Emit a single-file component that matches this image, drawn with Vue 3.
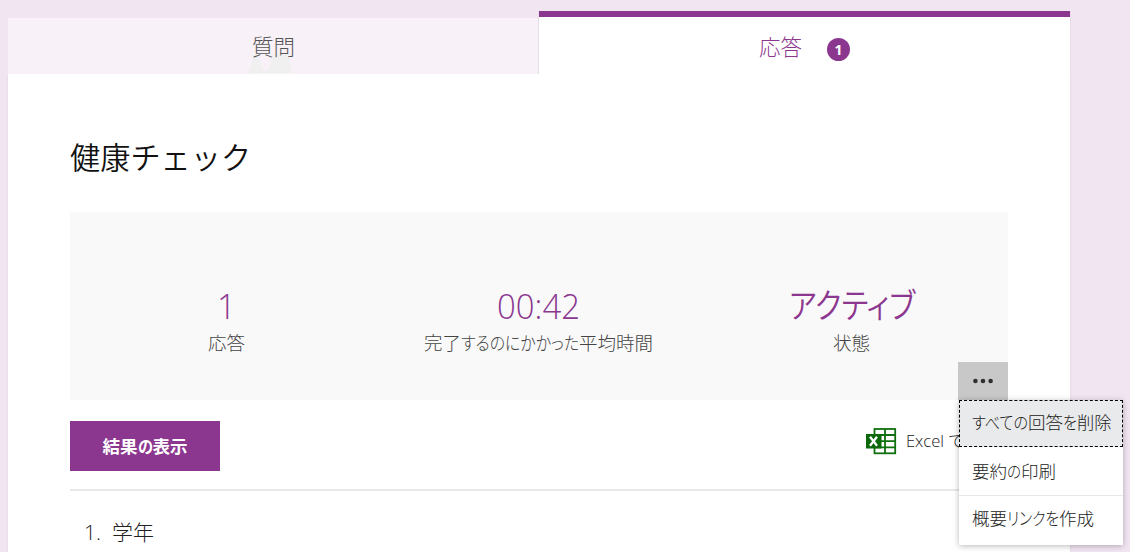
<script setup>
const stats = [
  { value: [['1', 19]], label: [['応答', 37]] },
  { value: [['00:42', 83]], label: [['完了', 37], ['するのにかかった', 118], ['平均時間', 74]] },
  { value: [['アクティブ', 126]], label: [['状態', 37]], kana: true },
]
const menu = [
  [['すべての', 56], ['回答', 35], ['を', 14], ['削除', 34.5]],
  [['要約', 35], ['の', 14], ['印刷', 35]],
  [['概要', 35], ['リンクを', 52], ['作成', 35]],
]
const button = [['結果', 35], ['の', 15], ['表示', 35]]

// Condenses a run of glyphs to a given advance width.
const vFit = {
  mounted(el, { value }) {
    const inner = el.firstElementChild
    inner.style.transform = `scaleX(${value / inner.getBoundingClientRect().width})`
    el.style.width = `${value}px`
  },
}
</script>

<template>
  <div class="page">
    <nav class="tabs">
      <div class="tab inactive">
        <svg class="ghost" width="46" height="20" viewBox="0 0 46 20">
          <path d="M0 19 6 1H10C13 8 14 17 18 17S22 8 25 0H41L44 19Z" fill="#f1f0f1" />
        </svg>
        <span class="tab-text">質問</span>
      </div>
      <div class="tab active"><span class="tab-text">応答</span><span class="badge">1</span></div>
    </nav>
    <main class="card">
      <h1>健康チェック</h1>
      <section class="summary">
        <div v-for="(s, i) in stats" :key="i" class="stat">
          <div class="value" :class="{ kana: s.kana }"><span v-for="([t, w], j) in s.value" :key="j" v-fit="w" class="run"><span>{{ t }}</span></span></div>
          <div class="label"><span v-for="([t, w], j) in s.label" :key="j" v-fit="w" class="run"><span>{{ t }}</span></span></div>
        </div>
        <div class="more">
          <svg width="20" height="6" viewBox="0 0 20 6" fill="#2f2f2f">
            <circle cx="2.4" cy="3" r="2.3" /><circle cx="10" cy="3" r="2.3" /><circle cx="17.6" cy="3" r="2.3" />
          </svg>
          <div class="menu">
            <div v-for="(m, i) in menu" :key="i" class="item" :class="{ focused: i === 0 }"><span v-for="([t, w], j) in m" :key="j" v-fit="w" class="run"><span>{{ t }}</span></span></div>
          </div>
        </div>
      </section>
      <div class="actions">
        <button class="results"><span v-for="([t, w], j) in button" :key="j" v-fit="w" class="run"><span>{{ t }}</span></span></button>
        <div class="excel">
          <svg width="31" height="27" viewBox="0 0 31 27">
            <rect x="8.5" y="1" width="20.7" height="24.3" fill="#fff" stroke="#107010" stroke-width="1.8" />
            <path d="M9 7H29M9 13.2H29M9 19.3H29M19 1V25" stroke="#107010" stroke-width="1.8" />
            <rect x="0" y="6" width="15.5" height="14.5" fill="#0b690b" />
            <path d="M4 8.8 11 17.8M11 8.8 4 17.8" stroke="#fff" stroke-width="2.3" />
          </svg>
          <span class="excel-text"><span v-fit="38" class="run"><span>Excel</span></span><span class="tail">で</span></span>
        </div>
      </div>
      <div class="question"><span v-fit="17" class="run"><span>1.</span></span><span class="q-title">学年</span></div>
    </main>
  </div>
</template>

<style>
body { background: #f1e5f2; overflow: hidden; }
</style>

<style scoped>
* { box-sizing: border-box; }
.page {
  width: 1130px; height: 552px; padding: 11px 60px 0 8px; overflow: hidden;
  font-family: "Open Sans", "Noto Sans CJK JP", sans-serif; font-weight: 300; color: #222;
  background: #f1e5f2;
}
.run { display: inline-block; white-space: nowrap; }
.run > span { display: inline-block; transform-origin: 0 50%; font-feature-settings: "palt"; }
.tabs { display: flex; height: 63px; align-items: flex-end; position: relative; z-index: 1; }
.tab { width: 531px; display: flex; justify-content: center; align-items: center; font-size: 21.5px; position: relative; }
.tab-text { line-height: 30px; padding-top: 2px; }
.inactive { height: 56px; background: #f8f1f8; color: #555; }
.inactive .tab-text { position: relative; }
.ghost { position: absolute; left: 240px; bottom: 0; }
.active { height: 63px; background: #fff; border-top: 6px solid #8c378f; color: #8c378f; box-shadow: 1px 0 0 #e6dbe7, -1px 0 0 #e7dfe8; }
.badge { width: 23px; height: 23px; margin-left: 25px; margin-top: 7px; border-radius: 50%; background: #8c378f; color: #fff; font-size: 14px; font-weight: 700; line-height: 23px; text-align: center; }
.card { width: 1062px; height: 500px; background: #fff; padding: 62px 62px 0; box-shadow: 0 2px 2px #ddd0df; }
h1 { margin: 0; height: 76px; font-size: 30.2px; font-weight: 350; line-height: 44px; color: #111; white-space: nowrap; }
.summary { width: 938px; height: 188px; background: #f9f9f9; display: grid; grid-template-columns: repeat(3, 1fr); padding-top: 69px; position: relative; }
.stat { text-align: center; }
.value { color: #8c378f; font-size: 34px; font-weight: 350; line-height: 50px; height: 49px; }
.value.kana { font-family: "Noto Sans CJK JP", sans-serif; line-height: 46px; }
.label { font-size: 18.5px; line-height: 26px; color: #444; }
.more { position: absolute; right: 0; bottom: 0; width: 50px; height: 38px; background: #c8c8c8; display: flex; align-items: center; justify-content: center; }
.menu { position: absolute; left: 1px; top: 38px; width: 164px; height: 145px; background: #fff; box-shadow: 0 1px 6px rgba(0,0,0,.28); z-index: 3; }
.item { height: 49px; padding-left: 13px; font-size: 17.5px; line-height: 48px; white-space: nowrap; border-bottom: 1px solid #e8e8e8; }
.item:last-child { border: 0; line-height: 44px; }
.item.focused { height: 47px; background: #e9eaeb; border: 1px dashed #000; padding-left: 12px; line-height: 43px; }
.actions { height: 91px; border-bottom: 2px solid #e8e8e8; display: flex; justify-content: space-between; padding-top: 21px; }
.results { width: 150px; height: 50px; border: 0; padding: 0; background: #8c378f; color: #fff; font: 700 17.5px/50px "Noto Sans CJK JP", sans-serif; }
.excel { display: flex; width: 142px; height: 40px; align-items: center; }
.excel svg { flex: none; }
.excel-text { margin-left: 9px; font-size: 17px; line-height: 40px; white-space: nowrap; }
.excel-text .run { font-weight: 350; }
.tail { margin-left: 4px; }
.question { padding: 26px 0 0 14px; font-size: 21px; line-height: 30px; }
.question .run { font-weight: 350; }
.q-title { margin-left: 11px; }
</style>
